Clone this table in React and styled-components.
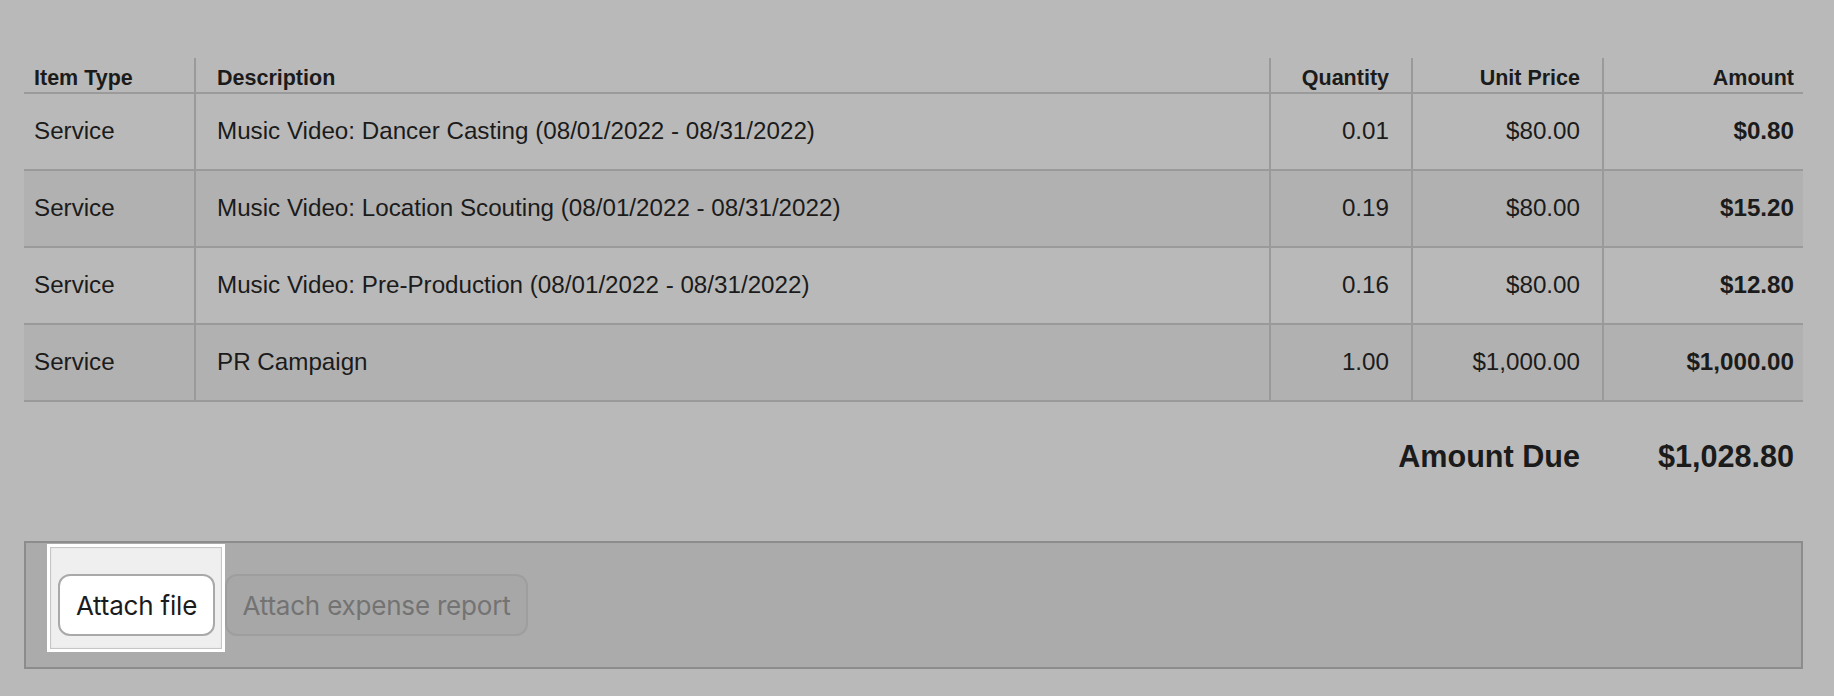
import React from 'react';
import styled, { createGlobalStyle } from 'styled-components';

const GlobalStyle = createGlobalStyle`
  body {
    margin: 0;
    background: #b9b9b9;
    font-family: "Liberation Sans", Arial, Helvetica, sans-serif;
    color: #1b1b1b;
  }
`;

const Page = styled.div`
  padding: 58px 31px 0 24px;
`;

const Grid = styled.div`
  display: grid;
  grid-template-columns: 172px 1075px 142px 191px 199px;
`;

const HeadRow = styled(Grid)`
  height: 36px;
  border-bottom: 2px solid #9a9a9a;
  box-sizing: border-box;
`;

const Row = styled(Grid)`
  height: 77px;
  box-sizing: border-box;
  border-bottom: 2px solid #9a9a9a;
  background: ${({ $striped }) => ($striped ? '#b1b1b1' : 'transparent')};
`;

const Cell = styled.div`
  display: flex;
  align-items: ${({ $head }) => ($head ? 'flex-end' : 'center')};
  justify-content: ${({ $right }) => ($right ? 'flex-end' : 'flex-start')};
  padding: ${({ $head }) => ($head ? '0 22px 1px 21px' : '0 22px 1px 21px')};
  font-size: ${({ $head }) => ($head ? '21.5px' : '24.2px')};
  font-weight: ${({ $bold }) => ($bold ? 700 : 400)};
  line-height: 1.15;
  white-space: nowrap;
  border-right: 2px solid #9a9a9a;

  &:first-child {
    padding-left: 10px;
  }
  &:last-child {
    border-right: none;
    padding-right: 9px;
  }
`;

const Totals = styled.div`
  display: grid;
  grid-template-columns: 1fr 199px;
  padding-top: 36px;
  font-size: 30.6px;
  font-weight: 700;
  line-height: 36px;
`;

const TotalLabel = styled.div`
  text-align: right;
  padding-right: 24px;
`;

const TotalValue = styled.div`
  text-align: right;
  padding-right: 9px;
`;

const AttachBox = styled.div`
  margin-top: 67px;
  height: 128px;
  box-sizing: border-box;
  border: 2px solid #8c8c8c;
  background: #ababab;
  padding: 1px 0 15px 21px;
  display: flex;
  align-items: flex-start;
`;

const DropFrame = styled.div`
  border: 3px solid #ffffff;
  background: #efefef;
  box-shadow: inset 0 0 0 1px #c6c6c6, inset 0 0 3px #d0d0d0;
  padding: 27px 7px 13px 8px;
`;

const Button = styled.button`
  box-sizing: border-box;
  height: 62px;
  width: ${({ $w }) => $w}px;
  border-radius: 12px;
  border: 2px solid ${({ disabled }) => (disabled ? '#9e9e9e' : '#a9a9a9')};
  background: ${({ disabled }) => (disabled ? '#a7a7a7' : '#ffffff')};
  color: ${({ disabled }) => (disabled ? '#737373' : '#1b1b1b')};
  font-family: Inter, "Liberation Sans", sans-serif;
  font-size: 26px;
  letter-spacing: -0.2px;
  padding: 0;
  margin-top: ${({ $top }) => $top || 0}px;
  cursor: pointer;
`;

const items = [
  { type: 'Service', desc: 'Music Video: Dancer Casting (08/01/2022 - 08/31/2022)', qty: '0.01', price: '$80.00', amount: '$0.80' },
  { type: 'Service', desc: 'Music Video: Location Scouting (08/01/2022 - 08/31/2022)', qty: '0.19', price: '$80.00', amount: '$15.20' },
  { type: 'Service', desc: 'Music Video: Pre-Production (08/01/2022 - 08/31/2022)', qty: '0.16', price: '$80.00', amount: '$12.80' },
  { type: 'Service', desc: 'PR Campaign', qty: '1.00', price: '$1,000.00', amount: '$1,000.00' },
];

const App = () => {
  return (
    <>
      <GlobalStyle />
      <Page>
        <HeadRow>
          <Cell $head $bold>Item Type</Cell>
          <Cell $head $bold>Description</Cell>
          <Cell $head $bold $right>Quantity</Cell>
          <Cell $head $bold $right>Unit Price</Cell>
          <Cell $head $bold $right>Amount</Cell>
        </HeadRow>
        {items.map((it, i) => (
          <Row key={i} $striped={i % 2 === 1}>
            <Cell>{it.type}</Cell>
            <Cell>{it.desc}</Cell>
            <Cell $right>{it.qty}</Cell>
            <Cell $right>{it.price}</Cell>
            <Cell $right $bold>{it.amount}</Cell>
          </Row>
        ))}
        <Totals>
          <TotalLabel>Amount Due</TotalLabel>
          <TotalValue>$1,028.80</TotalValue>
        </Totals>
        <AttachBox>
          <DropFrame>
            <Button $w={157}>Attach file</Button>
          </DropFrame>
          <Button $w={303} $top={30} disabled>Attach expense report</Button>
        </AttachBox>
      </Page>
    </>
  );
};

export default App;
